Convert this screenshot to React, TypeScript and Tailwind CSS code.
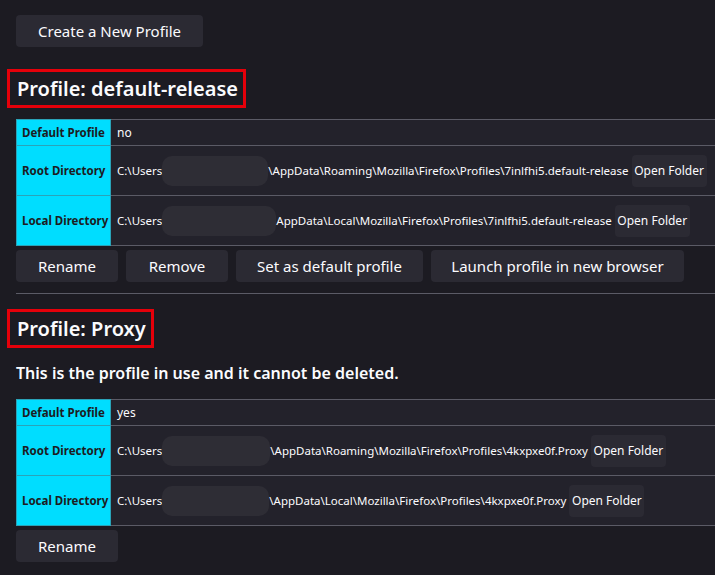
import React from "react";

type PathRow = {
  label: string;
  prefixW: number;
  blobW: number;
  suffix: string;
};

type Profile = {
  name: string;
  isDefault: boolean;
  inUse: boolean;
  root: PathRow;
  local: PathRow;
};

const profiles: Profile[] = [
  {
    name: "default-release",
    isDefault: false,
    inUse: false,
    root: {
      label: "Root Directory",
      prefixW: 45,
      blobW: 106,
      suffix: "\\AppData\\Roaming\\Mozilla\\Firefox\\Profiles\\7inlfhi5.default-release",
    },
    local: {
      label: "Local Directory",
      prefixW: 43,
      blobW: 114,
      suffix: "AppData\\Local\\Mozilla\\Firefox\\Profiles\\7inlfhi5.default-release",
    },
  },
  {
    name: "Proxy",
    isDefault: true,
    inUse: true,
    root: {
      label: "Root Directory",
      prefixW: 43,
      blobW: 108,
      suffix: "\\AppData\\Roaming\\Mozilla\\Firefox\\Profiles\\4kxpxe0f.Proxy",
    },
    local: {
      label: "Local Directory",
      prefixW: 43,
      blobW: 107,
      suffix: "\\AppData\\Local\\Mozilla\\Firefox\\Profiles\\4kxpxe0f.Proxy",
    },
  },
];

function Btn({ children, w }: { children: React.ReactNode; w: string }) {
  return (
    <button
      className={`${w} h-[32px] rounded-[4px] bg-[#2b2a33] text-[15px] text-[#fbfbfe] shrink-0`}
    >
      {children}
    </button>
  );
}

function PathCell({ row }: { row: PathRow }) {
  return (
    <td className="border border-[#5b5b66] bg-[#23222b] pl-[6px] pr-[4px] h-[50px]">
      <div className="flex items-center whitespace-nowrap text-[11.5px]">
        {/* username is blurred out in the screenshot */}
        <span className="shrink-0" style={{ minWidth: row.prefixW }}>
          C:\Users
        </span>
        <span
          className="inline-block h-[30px] shrink-0 rounded-[10px] bg-[#2e2d35]"
          style={{ width: row.blobW }}
        />
        <span>{row.suffix}</span>
        <button className="ml-[3px] h-[32px] w-[75px] shrink-0 rounded-[4px] bg-[#2b2a33] text-[12px] text-[#fbfbfe]">
          Open Folder
        </button>
      </div>
    </td>
  );
}

function HeadCell({ children }: { children: React.ReactNode }) {
  return (
    <th className="border border-[#2aa3b8] bg-[#00ddff] px-[5px] text-left text-[11.5px] font-bold text-[#1c1b22] whitespace-nowrap">
      {children}
    </th>
  );
}

function ProfileSection({ p }: { p: Profile }) {
  return (
    <section>
      <h2 className="-ml-[9px] inline-flex h-[39px] items-center border-[3px] border-[#e5000a] pl-[7px] pr-[5px] text-[20px] font-semibold">
        Profile: {p.name}
      </h2>
      {p.inUse && (
        <p className="mt-[13px] text-[16px] font-semibold">
          This is the profile in use and it cannot be deleted.
        </p>
      )}
      <table
        className={`${p.inUse ? "mt-[14px]" : "mt-[11px]"} w-[720px] table-fixed border-collapse`}
      >
        <colgroup>
          <col className="w-[94px]" />
          <col />
        </colgroup>
        <tbody>
          <tr className="h-[26px]">
            <HeadCell>Default Profile</HeadCell>
            <td className="border border-[#5b5b66] bg-[#23222b] pl-[6px] text-[12px]">
              {p.isDefault ? "yes" : "no"}
            </td>
          </tr>
          <tr>
            <HeadCell>{p.root.label}</HeadCell>
            <PathCell row={p.root} />
          </tr>
          <tr>
            <HeadCell>{p.local.label}</HeadCell>
            <PathCell row={p.local} />
          </tr>
        </tbody>
      </table>
      <div className="mt-[4px] flex gap-[8px]">
        <Btn w="w-[102px]">Rename</Btn>
        {!p.inUse && (
          <>
            <Btn w="w-[102px]">Remove</Btn>
            <Btn w="w-[187px]">Set as default profile</Btn>
            <Btn w="w-[253px]">Launch profile in new browser</Btn>
          </>
        )}
      </div>
    </section>
  );
}

export default function App() {
  return (
    <div
      className="h-[575px] w-[715px] overflow-hidden bg-[#1c1b22] text-[#fbfbfe]"
      style={{ fontFamily: '"Noto Sans", "Open Sans", sans-serif' }}
    >
      <div className="w-[740px] pl-4 pt-[15px]">
        <Btn w="w-[187px]">Create a New Profile</Btn>
        <div className="mt-[22px]">
          <ProfileSection p={profiles[0]} />
        </div>
        <hr className="mt-[11px] mb-[15px] border-t border-[#5b5b66]" />
        <ProfileSection p={profiles[1]} />
      </div>
    </div>
  );
}
